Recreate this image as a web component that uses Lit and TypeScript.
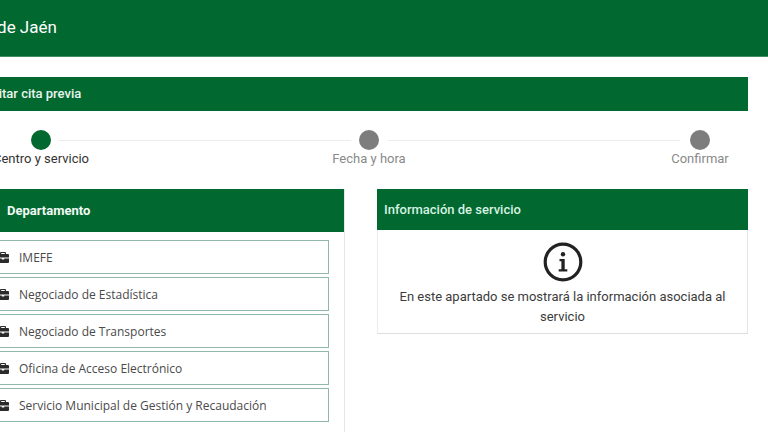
import { LitElement, html, css } from "lit";
import { customElement } from "lit/decorators.js";

const departments = [
  "IMEFE",
  "Negociado de Estadística",
  "Negociado de Transportes",
  "Oficina de Acceso Electrónico",
  "Servicio Municipal de Gestión y Recaudación",
];

const steps = [
  { label: "Centro y servicio", active: true, width: 96 },
  { label: "Fecha y hora", active: false, width: 73 },
  { label: "Confirmar", active: false, width: 58 },
];

const briefcase = html`<svg class="case" viewBox="0 0 12 11" aria-hidden="true">
  <path fill="#2b2b2b" d="M4 0h4a1 1 0 0 1 1 1v1h2a1 1 0 0 1 1 1v2.6H0V3a1 1 0 0 1 1-1h2V1a1 1 0 0 1 1-1zm.2 1.1V2h3.6v-.9z"/>
  <path fill="#2b2b2b" d="M0 6.5h4.8v1.1h2.4V6.5H12V10a1 1 0 0 1-1 1H1a1 1 0 0 1-1-1z"/>
</svg>`;

const info = html`<svg class="info" viewBox="0 0 40 40" aria-hidden="true">
  <circle cx="20" cy="20" r="17.8" fill="none" stroke="#222" stroke-width="3.2"/>
  <circle cx="20" cy="12.2" r="2.2" fill="#222"/>
  <path fill="#222" d="M16.5 17h5.2v10.2h2.6v2.2h-8.6v-2.2h2.7v-8h-1.9z"/>
</svg>`;

@customElement("app-root")
export class AppRoot extends LitElement {
  static styles = css`
    :host {
      display: block;
      width: 768px;
      height: 432px;
      overflow: hidden;
      background: #fff;
      font-family: Roboto, "Liberation Sans", sans-serif;
      color: #333;
    }
    .top {
      height: 57px;
      box-sizing: border-box;
      background: #01682f;
      border-bottom: 1px solid #3f8f63;
      color: #fff;
      font-size: 17px;
      line-height: 54px;
      margin-left: -112px;
      white-space: nowrap;
    }
    .page {
      margin-left: -20px;
      width: 768px;
      padding-top: 20px;
    }
    .bar {
      height: 34px;
      background: #01682f;
      color: #e8f5ee;
      font-size: 13px;
      font-weight: 500;
      line-height: 34px;
      padding-left: 0;
      text-indent: -10px;
      white-space: nowrap;
    }
    .stepper {
      display: flex;
      margin: 19px 19px 0 13px;
      height: 40px;
    }
    .step {
      flex: none;
      display: flex;
      flex-direction: column;
      align-items: center;
      position: relative;
      z-index: 1;
      white-space: nowrap;
      font-size: 13px;
      line-height: 18px;
      color: #8a8a8a;
    }
    .step.on {
      color: #333;
    }
    .dot {
      width: 20px;
      height: 20px;
      border-radius: 50%;
      background: #7d7d7d;
      margin-bottom: 0;
    }
    .step.on .dot {
      background: #01682f;
    }
    .line {
      flex: 1;
      height: 1px;
      background: #ececec;
      margin: 10px -8px 0;
    }
    .line.a {
      margin-left: -31px;
      margin-right: -18px;
    }
    .line.b {
      margin-left: -18px;
      margin-right: -9px;
    }
    .cols {
      display: grid;
      grid-template-columns: 365px 371px;
      gap: 32px;
      margin-top: 19px;
      align-items: start;
    }
    .card {
      box-sizing: border-box;
      background: #fff;
      border-right: 1px solid #e6e6e6;
      border-bottom: 1px solid #dedede;
    }
    .card.right {
      border-left: 1px solid #ececec;
    }
    .dept-head {
      height: 43px;
      background: #01682f;
      color: #f2faf5;
      font-size: 13px;
      font-weight: 700;
      line-height: 44px;
      padding-left: 27px;
    }
    .list {
      display: flex;
      flex-direction: column;
      gap: 3px;
      padding: 8px 15px 10px 5px;
    }
    .row {
      height: 34px;
      box-sizing: border-box;
      border: 1px solid #8fb8aa;
      display: flex;
      align-items: center;
      gap: 10px;
      padding-left: 11px;
      font-family: "Open Sans", "Noto Sans", sans-serif;
      font-size: 12px;
      color: #4a4a4a;
      white-space: nowrap;
    }
    .case {
      width: 12px;
      height: 11px;
      flex: none;
    }
    .info-head {
      height: 41px;
      background: #01682f;
      color: #d6f2e2;
      font-size: 13px;
      font-weight: 500;
      line-height: 41px;
      margin-left: -1px;
      margin-right: -1px;
      padding-left: 7px;
    }
    .info-body {
      display: flex;
      flex-direction: column;
      align-items: center;
      padding: 12px 15px 6px;
      text-align: center;
      font-size: 13px;
      line-height: 20px;
      color: #3c3c3c;
    }
    .info {
      width: 40px;
      height: 40px;
      margin-bottom: 5px;
    }
  `;

  render() {
    return html`
      <div class="top">Ayuntamiento de Jaén</div>
      <div class="page">
        <div class="bar">Solicitar cita previa</div>
        <div class="stepper">
          ${steps.map(
            (s, i) => html`
              ${i > 0 ? html`<div class="line ${i === 1 ? "a" : "b"}"></div>` : ""}
              <div class="step ${s.active ? "on" : ""}" style="width:${s.width}px">
                <span class="dot"></span>
                <span>${s.label}</span>
              </div>
            `
          )}
        </div>
        <div class="cols">
          <section class="card">
            <div class="dept-head">Departamento</div>
            <div class="list">
              ${departments.map((d) => html`<div class="row">${briefcase}<span>${d}</span></div>`)}
            </div>
          </section>
          <section class="card right">
            <div class="info-head">Información de servicio</div>
            <div class="info-body">
              ${info}
              <div>En este apartado se mostrará la información asociada al servicio</div>
            </div>
          </section>
        </div>
      </div>
    `;
  }
}
